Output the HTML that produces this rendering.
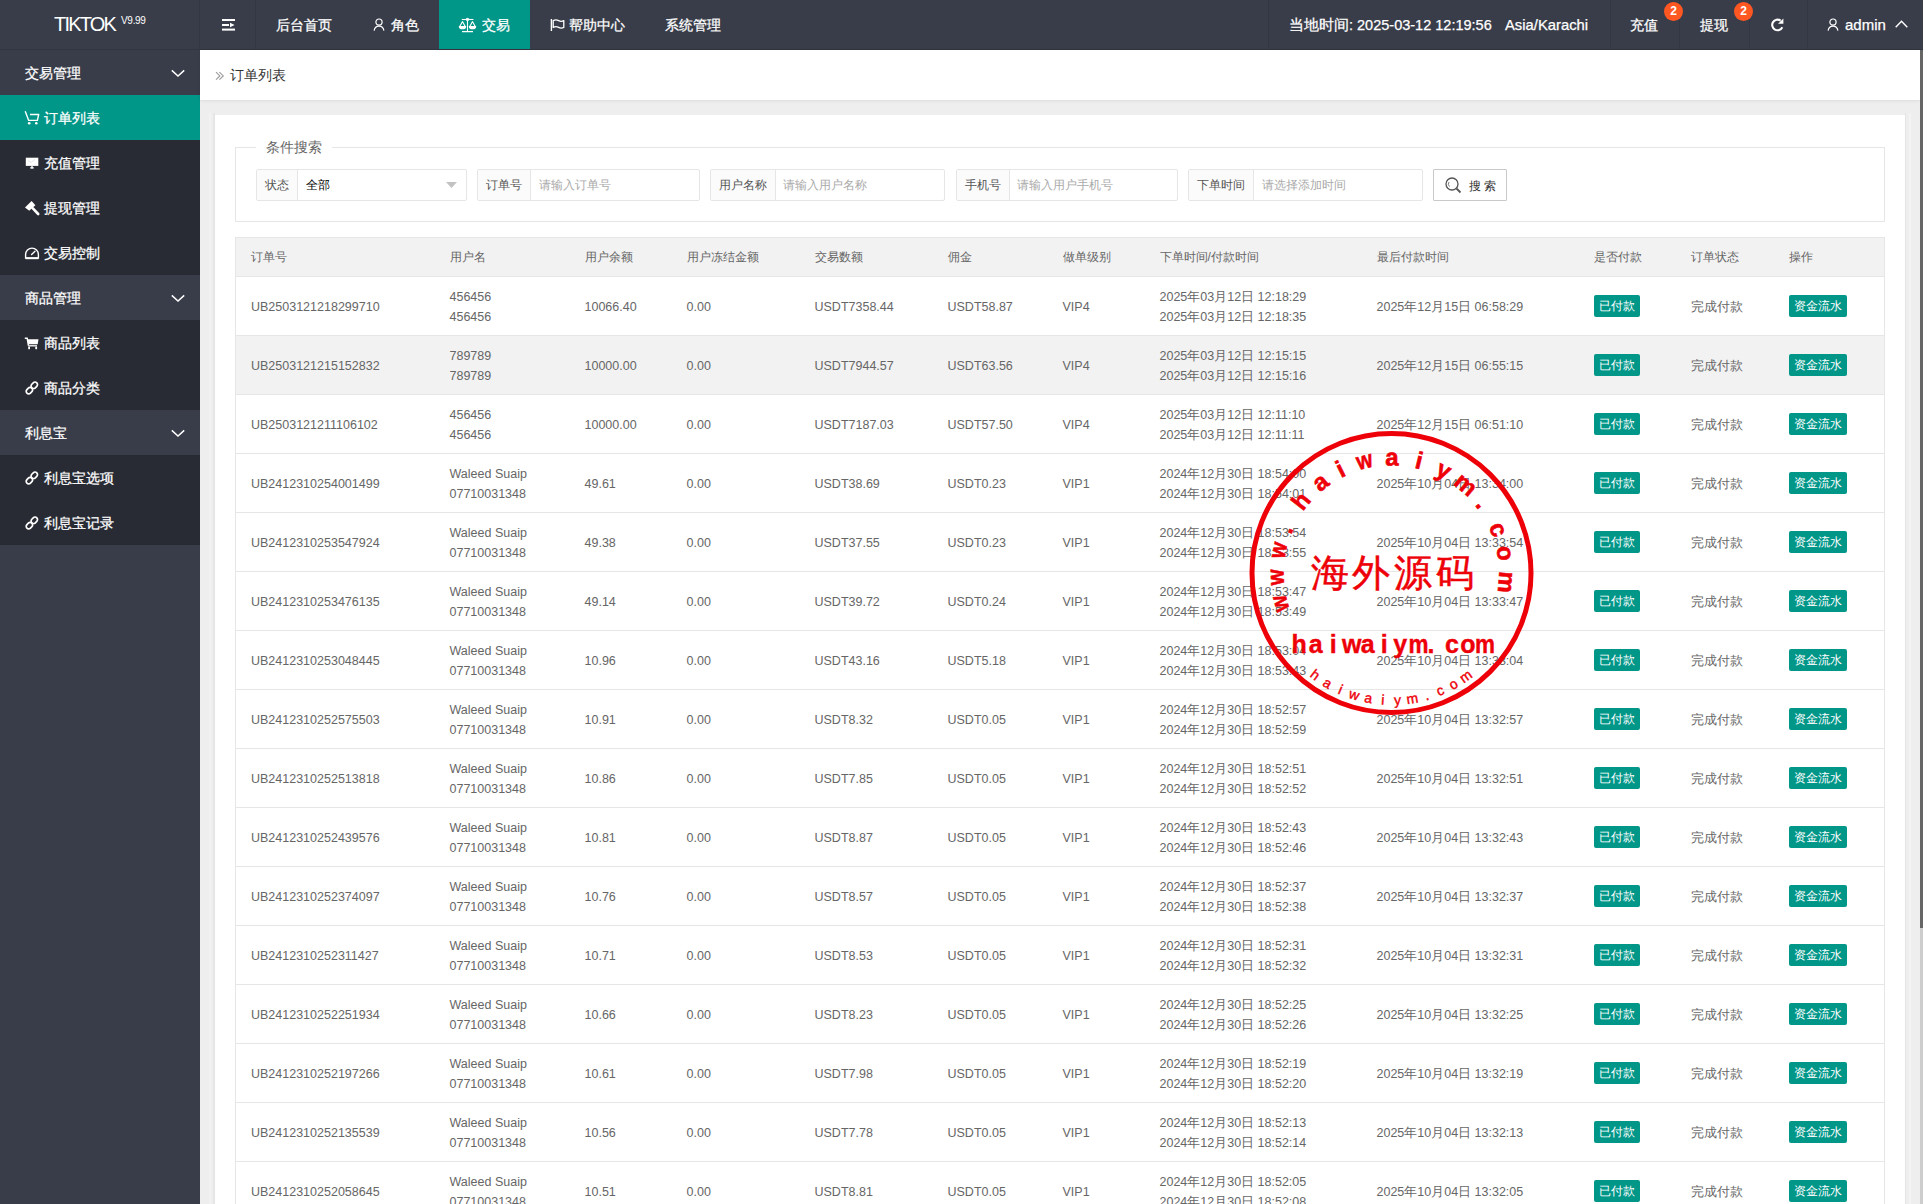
<!DOCTYPE html><html><head><meta charset="utf-8"><title>订单列表</title><style>*{margin:0;padding:0;box-sizing:border-box}
svg{display:block}
html,body{width:1923px;height:1204px;overflow:hidden;background:#eeeeee;font-family:"Liberation Sans",sans-serif;color:#666}
.a{position:absolute;white-space:nowrap}
.hd{position:absolute;left:0;top:0;width:1923px;height:50px;background:#393D49}
.hdl{position:absolute;left:0;top:49px;width:1923px;height:1px;background:#32353f}
.sep{position:absolute;top:0;width:1px;height:49px;background:#333743}
.nt{position:absolute;color:#fff;font-size:14px;line-height:14px;white-space:nowrap;-webkit-text-stroke:0.25px #fff}
.side{position:absolute;left:0;top:50px;width:200px;height:1154px;background:#393D49}
.it{position:absolute;left:0;width:200px;height:45px}
.it.ch{background:#282B33}
.it.on{background:#009688}
.st{position:absolute;left:25px;color:#fff;font-size:14px;line-height:14px;white-space:nowrap;-webkit-text-stroke:0.25px #fff}
.crumb{position:absolute;left:200px;top:50px;width:1720px;height:50px;background:#fff;box-shadow:0 1px 3px rgba(0,0,0,.08)}
.card{position:absolute;left:215px;top:115px;width:1690px;height:1100px;background:#fff}
.sb{position:absolute;left:1920px;top:50px;width:3px;height:1154px;background:#cdcdcd}
.sbt{position:absolute;left:1920px;top:50px;width:3px;height:878px;background:#666}
.fs{position:absolute;left:235px;top:147px;width:1650px;height:75px;border:1px solid #e6e6e6}
.lg{position:absolute;left:256px;top:139px;padding:0 10px;background:#fff;font-size:14px;line-height:16px;color:#666}
.ig{position:absolute;top:169px;height:32px;border:1px solid #e6e6e6;background:#fff;border-radius:2px}
.ig .lb{position:absolute;left:0;top:0;height:30px;background:#fbfbfb;border-right:1px solid #e6e6e6;font-size:12px;line-height:30px;color:#555;padding:0 8px}
.ig .ph{position:absolute;top:0;font-size:12px;line-height:30px;color:#aaa}
.btn{position:absolute;left:1433px;top:169px;width:74px;height:32px;border:1px solid #c9c9c9;border-radius:1px;background:#fff}
.tb{position:absolute;left:235px;top:237px;border-collapse:collapse;table-layout:fixed;width:1650px;border:1px solid #e6e6e6}
.tb th{background:#f2f2f2;font-weight:normal;text-align:left;height:39px;padding:0 15px;border-bottom:1px solid #e6e6e6;font-size:12px;color:#666}
.tb td{height:59px;padding:1px 15px 0 15px;border-bottom:1px solid #e6e6e6;font-size:12.5px;line-height:20px;color:#666;white-space:nowrap}
.tb tr.hov td{background:#f2f2f2}
.bd{position:relative;top:-1px;display:inline-block;height:22px;line-height:22px;padding:0 5px;background:#009688;color:#fff;border-radius:2px;font-size:12px}
</style></head><body><div class="hd"></div>
<div class="hdl"></div>
<div class="a" style="left:54px;top:14px;color:#fff;font-size:20px;line-height:20px;letter-spacing:-1.8px">TIKTOK</div>
<div class="a" style="left:121px;top:16px;color:#fff;font-size:10px;line-height:10px;letter-spacing:-0.3px">V9.99</div>
<div class="sep" style="left:199px"></div>
<div class="sep" style="left:255px"></div>
<svg class="a" style="left:222px;top:19px" width="13" height="12" viewBox="0 0 13 12"><rect x="0" y="0" width="13" height="2" fill="#fff"/><rect x="0" y="5" width="7" height="2" fill="#fff"/><path d="M8 3.8 L12.6 6 L8 8.2z" fill="#fff"/><rect x="0" y="9.6" width="13" height="2" fill="#fff"/></svg>
<div class="nt" style="left:276px;top:18px">后台首页</div>
<svg class="a" style="left:373px;top:17px" width="12" height="15" viewBox="0 0 12 15"><circle cx="6" cy="5.1" r="3.1" fill="none" stroke="#fff" stroke-width="1.2"/><path d="M1.1 13.6 A5 5.6 0 0 1 10.9 13.6" fill="none" stroke="#fff" stroke-width="1.2"/></svg>
<div class="nt" style="left:391px;top:18px">角色</div>
<div class="a" style="left:439px;top:0;width:91px;height:49px;background:#009688"></div>
<svg class="a" style="left:458px;top:17px" width="19" height="16" viewBox="0 0 19 16"><g stroke="#fff" fill="none" stroke-width="1.1"><path d="M3.8 2.5 H15.4"/><circle cx="9.5" cy="2.4" r="1.1"/><path d="M9.5 3.5 V14.6"/><path d="M4 14.6 H15" stroke-width="1.3"/><path d="M4.5 4.6 L1.8 9.6 M4.5 4.6 L7.2 9.6 M14.5 4.6 L11.8 9.6 M14.5 4.6 L17.2 9.6"/><path d="M1.4 9.6 H7.6 Q7.4 11.8 4.5 11.8 Q1.6 11.8 1.4 9.6Z M11.4 9.6 H17.6 Q17.4 11.8 14.5 11.8 Q11.6 11.8 11.4 9.6Z" fill="#fff"/></g></svg>
<div class="nt" style="left:482px;top:18px">交易</div>
<svg class="a" style="left:550px;top:18px" width="15" height="14" viewBox="0 0 15 14"><path d="M1.4 1 V13" stroke="#fff" stroke-width="1.4"/><path d="M3.2 2.6 Q6 1.2 8.6 2.6 Q11.2 4 13.8 2.6 V9.4 Q11.2 10.8 8.6 9.4 Q6 8 3.2 9.4 Z" stroke="#fff" stroke-width="1.3" fill="none" stroke-linejoin="round"/></svg>
<div class="nt" style="left:569px;top:18px">帮助中心</div>
<div class="nt" style="left:665px;top:18px">系统管理</div>

<div class="sep" style="left:1268px"></div>
<div class="nt" style="left:1289px;top:18px;font-size:14.5px">当地时间: 2025-03-12 12:19:56</div>
<div class="nt" style="left:1505px;top:18px;font-size:14.8px">Asia/Karachi</div>
<div class="sep" style="left:1610px"></div>
<div class="nt" style="left:1630px;top:18px">充值</div>
<div class="sep" style="left:1679px"></div>
<div class="nt" style="left:1700px;top:18px">提现</div>
<div class="sep" style="left:1749px"></div>
<svg class="a" style="left:1769px;top:17px" width="16" height="16" viewBox="0 0 16 16"><path d="M13.3 10.2 A5.3 5.3 0 1 1 11.6 3.6" fill="none" stroke="#fff" stroke-width="2.1"/><path d="M9 6.7 L14.4 6.7 L14.4 1.6 Z" fill="#fff"/></svg>
<div class="sep" style="left:1807px"></div>
<div class="a" style="left:1664px;top:2px;width:19px;height:19px;border-radius:50%;background:#FF5722;color:#fff;font-size:12px;line-height:19px;text-align:center;font-weight:bold">2</div>
<div class="a" style="left:1734px;top:2px;width:19px;height:19px;border-radius:50%;background:#FF5722;color:#fff;font-size:12px;line-height:19px;text-align:center;font-weight:bold">2</div>
<svg class="a" style="left:1827px;top:17px" width="12" height="15" viewBox="0 0 12 15"><circle cx="6" cy="5.1" r="3.1" fill="none" stroke="#fff" stroke-width="1.2"/><path d="M1.1 13.6 A5 5.6 0 0 1 10.9 13.6" fill="none" stroke="#fff" stroke-width="1.2"/></svg>
<div class="nt" style="left:1845px;top:18px;font-size:15px">admin</div>
<div class="a" style="left:1895px;top:20px;width:13px;height:8px"><svg width="13" height="8" viewBox="0 0 13 8"><path d="M0.7 7.3 L6.5 1.3 L12.3 7.3" fill="none" stroke="#fff" stroke-width="1.4"/></svg></div>

<div class="side">
 <div class="it" style="top:0"><div class="st" style="top:16px">交易管理</div></div>
 <div class="it on" style="top:45px"><div class="st" style="left:44px;top:16px">订单列表</div></div>
 <div class="it ch" style="top:90px"><div class="st" style="left:44px;top:16px">充值管理</div></div>
 <div class="it ch" style="top:135px"><div class="st" style="left:44px;top:16px">提现管理</div></div>
 <div class="it ch" style="top:180px"><div class="st" style="left:44px;top:16px">交易控制</div></div>
 <div class="it" style="top:225px"><div class="st" style="top:16px">商品管理</div></div>
 <div class="it ch" style="top:270px"><div class="st" style="left:44px;top:16px">商品列表</div></div>
 <div class="it ch" style="top:315px"><div class="st" style="left:44px;top:16px">商品分类</div></div>
 <div class="it" style="top:360px"><div class="st" style="top:16px">利息宝</div></div>
 <div class="it ch" style="top:405px"><div class="st" style="left:44px;top:16px">利息宝选项</div></div>
 <div class="it ch" style="top:450px"><div class="st" style="left:44px;top:16px">利息宝记录</div></div>
</div>

<div class="crumb"></div>
<!-- sidebar arrows -->
<svg class="a" style="left:171px;top:69px" width="14" height="8" viewBox="0 0 14 8"><path d="M0.8 1.4 L7 7 L13.2 1.4" fill="none" stroke="#fff" stroke-width="1.5"/></svg>
<svg class="a" style="left:171px;top:294px" width="14" height="8" viewBox="0 0 14 8"><path d="M0.8 1.4 L7 7 L13.2 1.4" fill="none" stroke="#fff" stroke-width="1.5"/></svg>
<svg class="a" style="left:171px;top:429px" width="14" height="8" viewBox="0 0 14 8"><path d="M0.8 1.4 L7 7 L13.2 1.4" fill="none" stroke="#fff" stroke-width="1.5"/></svg>
<!-- cart outline -->
<svg class="a" style="left:24px;top:110px" width="16" height="16" viewBox="0 0 16 16"><path d="M1.2 1.2 L4.7 10.4 H13.4 L14.7 4.5 H6" fill="none" stroke="#fff" stroke-width="1.4" stroke-linejoin="round"/><circle cx="5.2" cy="13.3" r="1.3" fill="#fff"/><circle cx="12.3" cy="13.3" r="1.3" fill="#fff"/></svg>
<!-- monitor -->
<svg class="a" style="left:25px;top:157px" width="14" height="12" viewBox="0 0 14 12"><rect x="0.8" y="0.7" width="12.5" height="8.2" fill="#fff"/><path d="M3 3.5 L6 5.5 L10 2.5" stroke="#cfd3dc" stroke-width="0.6" fill="none"/><rect x="6.3" y="8.9" width="1.4" height="1.4" fill="#fff"/><ellipse cx="7" cy="10.9" rx="2" ry="0.8" fill="#fff"/></svg>
<!-- hammer -->
<svg class="a" style="left:24px;top:200px" width="17" height="17" viewBox="0 0 17 17"><path d="M1 7.5 L7.6 1 L11.4 5.2 L5.2 10.8 Z" fill="#fff"/><path d="M8.6 8.2 L14.2 14" stroke="#fff" stroke-width="2.6" stroke-linecap="round"/></svg>
<!-- gauge -->
<svg class="a" style="left:24px;top:246px" width="16" height="14" viewBox="0 0 16 14"><path d="M1.6 12 V8.5 A6.4 6.4 0 0 1 14.4 8.5 V12 Z" fill="none" stroke="#fff" stroke-width="1.4"/><path d="M1.6 12.3 H14.4" stroke="#fff" stroke-width="1.8"/><path d="M7.6 8.5 L11 5.3" stroke="#fff" stroke-width="1.4" stroke-linecap="round"/></svg>
<!-- filled cart -->
<svg class="a" style="left:24px;top:337px" width="16" height="14" viewBox="0 0 16 14"><path d="M0.8 1.3 H3.2 L4.4 8.6" fill="none" stroke="#fff" stroke-width="1.4"/><path d="M3.4 2.2 H14.5 L13.7 7.3 H4.3 Z" fill="#fff"/><path d="M4.3 8.8 H13" stroke="#fff" stroke-width="1.3"/><rect x="4.2" y="9.6" width="1.8" height="2.6" fill="#fff"/><rect x="11.3" y="9.6" width="1.8" height="2.6" fill="#fff"/></svg>
<!-- links -->
<svg class="a" style="left:24px;top:379px" width="17" height="17" viewBox="0 0 17 17"><g fill="none" stroke="#fff" stroke-width="1.7"><rect x="-3.5" y="-2.5" width="7" height="5" rx="2.5" transform="translate(5.4 11.6) rotate(-45)"/><rect x="-3.5" y="-2.5" width="7" height="5" rx="2.5" transform="translate(10.3 6.3) rotate(-45)"/></g></svg>
<svg class="a" style="left:24px;top:469px" width="17" height="17" viewBox="0 0 17 17"><g fill="none" stroke="#fff" stroke-width="1.7"><rect x="-3.5" y="-2.5" width="7" height="5" rx="2.5" transform="translate(5.4 11.6) rotate(-45)"/><rect x="-3.5" y="-2.5" width="7" height="5" rx="2.5" transform="translate(10.3 6.3) rotate(-45)"/></g></svg>
<svg class="a" style="left:24px;top:514px" width="17" height="17" viewBox="0 0 17 17"><g fill="none" stroke="#fff" stroke-width="1.7"><rect x="-3.5" y="-2.5" width="7" height="5" rx="2.5" transform="translate(5.4 11.6) rotate(-45)"/><rect x="-3.5" y="-2.5" width="7" height="5" rx="2.5" transform="translate(10.3 6.3) rotate(-45)"/></g></svg>
<!-- breadcrumb chevrons -->
<svg class="a" style="left:215px;top:71px" width="10" height="10" viewBox="0 0 10 10"><path d="M1 1.2 L4.9 4.9 L1 8.6 M4.4 1.2 L8.3 4.9 L4.4 8.6" fill="none" stroke="#9a9a9a" stroke-width="1.1"/></svg>

<div class="a" style="left:230px;top:68px;color:#333;font-size:14px;line-height:14px">订单列表</div>
<div class="a" style="left:1905px;top:113px;width:1px;height:1091px;background:#e4e4e4"></div><div class="a" style="left:1909px;top:113px;width:2px;height:1091px;background:#f3f3f3"></div><div class="a" style="left:213px;top:113px;width:2px;height:1091px;background:#e6e6e6"></div><div class="a" style="left:209px;top:113px;width:2px;height:1091px;background:#f2f2f2"></div>
<div class="card"></div>
<div class="fs"></div>
<div class="lg">条件搜索</div>

<div class="ig" style="left:256px;width:211px"><div class="lb">状态</div><div class="ph" style="left:49px;color:#000">全部</div>
<svg class="a" style="left:189px;top:12px" width="11" height="6" viewBox="0 0 11 6"><path d="M0 0 H11 L5.5 6Z" fill="#c2c2c2"/></svg></div>
<div class="ig" style="left:477px;width:223px"><div class="lb">订单号</div><div class="ph" style="left:61px">请输入订单号</div></div>
<div class="ig" style="left:710px;width:235px"><div class="lb">用户名称</div><div class="ph" style="left:72px">请输入用户名称</div></div>
<div class="ig" style="left:956px;width:222px"><div class="lb">手机号</div><div class="ph" style="left:60px">请输入用户手机号</div></div>
<div class="ig" style="left:1188px;width:235px"><div class="lb">下单时间</div><div class="ph" style="left:73px">请选择添加时间</div></div>
<div class="btn"><svg class="a" style="left:11px;top:7px" width="17" height="17" viewBox="0 0 17 17"><circle cx="7" cy="7" r="6" fill="none" stroke="#555" stroke-width="1.3"/><path d="M11.5 11.5 L15.5 15.5" stroke="#555" stroke-width="1.8"/><path d="M4 5 A3.5 3.5 0 0 0 4.5 9.5" fill="none" stroke="#555" stroke-width="0.8"/></svg>
<div class="a" style="left:35px;top:9px;font-size:12px;line-height:14px;color:#333;letter-spacing:3px">搜索</div></div>

<table class="tb"><colgroup><col style="width:199px"><col style="width:135px"><col style="width:102px"><col style="width:128px"><col style="width:133px"><col style="width:115px"><col style="width:97px"><col style="width:217px"><col style="width:217px"><col style="width:97px"><col style="width:98px"><col style="width:111px"></colgroup><thead><tr><th><div class="c">订单号</div></th><th><div class="c">用户名</div></th><th><div class="c">用户余额</div></th><th><div class="c">用户冻结金额</div></th><th><div class="c">交易数额</div></th><th><div class="c">佣金</div></th><th><div class="c">做单级别</div></th><th><div class="c">下单时间/付款时间</div></th><th><div class="c">最后付款时间</div></th><th><div class="c">是否付款</div></th><th><div class="c">订单状态</div></th><th><div class="c">操作</div></th></tr></thead><tbody><tr><td><div class="c">UB2503121218299710</div></td><td><div class="c">456456<br>456456</div></td><td><div class="c">10066.40</div></td><td><div class="c">0.00</div></td><td><div class="c">USDT7358.44</div></td><td><div class="c">USDT58.87</div></td><td><div class="c">VIP4</div></td><td><div class="c">2025年03月12日 12:18:29<br>2025年03月12日 12:18:35</div></td><td><div class="c">2025年12月15日 06:58:29</div></td><td><div class="c"><span class="bd">已付款</span></div></td><td><div class="c">完成付款</div></td><td><div class="c"><span class="bd bd2">资金流水</span></div></td></tr><tr class="hov"><td><div class="c">UB2503121215152832</div></td><td><div class="c">789789<br>789789</div></td><td><div class="c">10000.00</div></td><td><div class="c">0.00</div></td><td><div class="c">USDT7944.57</div></td><td><div class="c">USDT63.56</div></td><td><div class="c">VIP4</div></td><td><div class="c">2025年03月12日 12:15:15<br>2025年03月12日 12:15:16</div></td><td><div class="c">2025年12月15日 06:55:15</div></td><td><div class="c"><span class="bd">已付款</span></div></td><td><div class="c">完成付款</div></td><td><div class="c"><span class="bd bd2">资金流水</span></div></td></tr><tr><td><div class="c">UB2503121211106102</div></td><td><div class="c">456456<br>456456</div></td><td><div class="c">10000.00</div></td><td><div class="c">0.00</div></td><td><div class="c">USDT7187.03</div></td><td><div class="c">USDT57.50</div></td><td><div class="c">VIP4</div></td><td><div class="c">2025年03月12日 12:11:10<br>2025年03月12日 12:11:11</div></td><td><div class="c">2025年12月15日 06:51:10</div></td><td><div class="c"><span class="bd">已付款</span></div></td><td><div class="c">完成付款</div></td><td><div class="c"><span class="bd bd2">资金流水</span></div></td></tr><tr><td><div class="c">UB2412310254001499</div></td><td><div class="c">Waleed Suaip<br>07710031348</div></td><td><div class="c">49.61</div></td><td><div class="c">0.00</div></td><td><div class="c">USDT38.69</div></td><td><div class="c">USDT0.23</div></td><td><div class="c">VIP1</div></td><td><div class="c">2024年12月30日 18:54:00<br>2024年12月30日 18:54:01</div></td><td><div class="c">2025年10月04日 13:34:00</div></td><td><div class="c"><span class="bd">已付款</span></div></td><td><div class="c">完成付款</div></td><td><div class="c"><span class="bd bd2">资金流水</span></div></td></tr><tr><td><div class="c">UB2412310253547924</div></td><td><div class="c">Waleed Suaip<br>07710031348</div></td><td><div class="c">49.38</div></td><td><div class="c">0.00</div></td><td><div class="c">USDT37.55</div></td><td><div class="c">USDT0.23</div></td><td><div class="c">VIP1</div></td><td><div class="c">2024年12月30日 18:53:54<br>2024年12月30日 18:53:55</div></td><td><div class="c">2025年10月04日 13:33:54</div></td><td><div class="c"><span class="bd">已付款</span></div></td><td><div class="c">完成付款</div></td><td><div class="c"><span class="bd bd2">资金流水</span></div></td></tr><tr><td><div class="c">UB2412310253476135</div></td><td><div class="c">Waleed Suaip<br>07710031348</div></td><td><div class="c">49.14</div></td><td><div class="c">0.00</div></td><td><div class="c">USDT39.72</div></td><td><div class="c">USDT0.24</div></td><td><div class="c">VIP1</div></td><td><div class="c">2024年12月30日 18:53:47<br>2024年12月30日 18:53:49</div></td><td><div class="c">2025年10月04日 13:33:47</div></td><td><div class="c"><span class="bd">已付款</span></div></td><td><div class="c">完成付款</div></td><td><div class="c"><span class="bd bd2">资金流水</span></div></td></tr><tr><td><div class="c">UB2412310253048445</div></td><td><div class="c">Waleed Suaip<br>07710031348</div></td><td><div class="c">10.96</div></td><td><div class="c">0.00</div></td><td><div class="c">USDT43.16</div></td><td><div class="c">USDT5.18</div></td><td><div class="c">VIP1</div></td><td><div class="c">2024年12月30日 18:53:04<br>2024年12月30日 18:53:43</div></td><td><div class="c">2025年10月04日 13:33:04</div></td><td><div class="c"><span class="bd">已付款</span></div></td><td><div class="c">完成付款</div></td><td><div class="c"><span class="bd bd2">资金流水</span></div></td></tr><tr><td><div class="c">UB2412310252575503</div></td><td><div class="c">Waleed Suaip<br>07710031348</div></td><td><div class="c">10.91</div></td><td><div class="c">0.00</div></td><td><div class="c">USDT8.32</div></td><td><div class="c">USDT0.05</div></td><td><div class="c">VIP1</div></td><td><div class="c">2024年12月30日 18:52:57<br>2024年12月30日 18:52:59</div></td><td><div class="c">2025年10月04日 13:32:57</div></td><td><div class="c"><span class="bd">已付款</span></div></td><td><div class="c">完成付款</div></td><td><div class="c"><span class="bd bd2">资金流水</span></div></td></tr><tr><td><div class="c">UB2412310252513818</div></td><td><div class="c">Waleed Suaip<br>07710031348</div></td><td><div class="c">10.86</div></td><td><div class="c">0.00</div></td><td><div class="c">USDT7.85</div></td><td><div class="c">USDT0.05</div></td><td><div class="c">VIP1</div></td><td><div class="c">2024年12月30日 18:52:51<br>2024年12月30日 18:52:52</div></td><td><div class="c">2025年10月04日 13:32:51</div></td><td><div class="c"><span class="bd">已付款</span></div></td><td><div class="c">完成付款</div></td><td><div class="c"><span class="bd bd2">资金流水</span></div></td></tr><tr><td><div class="c">UB2412310252439576</div></td><td><div class="c">Waleed Suaip<br>07710031348</div></td><td><div class="c">10.81</div></td><td><div class="c">0.00</div></td><td><div class="c">USDT8.87</div></td><td><div class="c">USDT0.05</div></td><td><div class="c">VIP1</div></td><td><div class="c">2024年12月30日 18:52:43<br>2024年12月30日 18:52:46</div></td><td><div class="c">2025年10月04日 13:32:43</div></td><td><div class="c"><span class="bd">已付款</span></div></td><td><div class="c">完成付款</div></td><td><div class="c"><span class="bd bd2">资金流水</span></div></td></tr><tr><td><div class="c">UB2412310252374097</div></td><td><div class="c">Waleed Suaip<br>07710031348</div></td><td><div class="c">10.76</div></td><td><div class="c">0.00</div></td><td><div class="c">USDT8.57</div></td><td><div class="c">USDT0.05</div></td><td><div class="c">VIP1</div></td><td><div class="c">2024年12月30日 18:52:37<br>2024年12月30日 18:52:38</div></td><td><div class="c">2025年10月04日 13:32:37</div></td><td><div class="c"><span class="bd">已付款</span></div></td><td><div class="c">完成付款</div></td><td><div class="c"><span class="bd bd2">资金流水</span></div></td></tr><tr><td><div class="c">UB2412310252311427</div></td><td><div class="c">Waleed Suaip<br>07710031348</div></td><td><div class="c">10.71</div></td><td><div class="c">0.00</div></td><td><div class="c">USDT8.53</div></td><td><div class="c">USDT0.05</div></td><td><div class="c">VIP1</div></td><td><div class="c">2024年12月30日 18:52:31<br>2024年12月30日 18:52:32</div></td><td><div class="c">2025年10月04日 13:32:31</div></td><td><div class="c"><span class="bd">已付款</span></div></td><td><div class="c">完成付款</div></td><td><div class="c"><span class="bd bd2">资金流水</span></div></td></tr><tr><td><div class="c">UB2412310252251934</div></td><td><div class="c">Waleed Suaip<br>07710031348</div></td><td><div class="c">10.66</div></td><td><div class="c">0.00</div></td><td><div class="c">USDT8.23</div></td><td><div class="c">USDT0.05</div></td><td><div class="c">VIP1</div></td><td><div class="c">2024年12月30日 18:52:25<br>2024年12月30日 18:52:26</div></td><td><div class="c">2025年10月04日 13:32:25</div></td><td><div class="c"><span class="bd">已付款</span></div></td><td><div class="c">完成付款</div></td><td><div class="c"><span class="bd bd2">资金流水</span></div></td></tr><tr><td><div class="c">UB2412310252197266</div></td><td><div class="c">Waleed Suaip<br>07710031348</div></td><td><div class="c">10.61</div></td><td><div class="c">0.00</div></td><td><div class="c">USDT7.98</div></td><td><div class="c">USDT0.05</div></td><td><div class="c">VIP1</div></td><td><div class="c">2024年12月30日 18:52:19<br>2024年12月30日 18:52:20</div></td><td><div class="c">2025年10月04日 13:32:19</div></td><td><div class="c"><span class="bd">已付款</span></div></td><td><div class="c">完成付款</div></td><td><div class="c"><span class="bd bd2">资金流水</span></div></td></tr><tr><td><div class="c">UB2412310252135539</div></td><td><div class="c">Waleed Suaip<br>07710031348</div></td><td><div class="c">10.56</div></td><td><div class="c">0.00</div></td><td><div class="c">USDT7.78</div></td><td><div class="c">USDT0.05</div></td><td><div class="c">VIP1</div></td><td><div class="c">2024年12月30日 18:52:13<br>2024年12月30日 18:52:14</div></td><td><div class="c">2025年10月04日 13:32:13</div></td><td><div class="c"><span class="bd">已付款</span></div></td><td><div class="c">完成付款</div></td><td><div class="c"><span class="bd bd2">资金流水</span></div></td></tr><tr><td><div class="c">UB2412310252058645</div></td><td><div class="c">Waleed Suaip<br>07710031348</div></td><td><div class="c">10.51</div></td><td><div class="c">0.00</div></td><td><div class="c">USDT8.81</div></td><td><div class="c">USDT0.05</div></td><td><div class="c">VIP1</div></td><td><div class="c">2024年12月30日 18:52:05<br>2024年12月30日 18:52:08</div></td><td><div class="c">2025年10月04日 13:32:05</div></td><td><div class="c"><span class="bd">已付款</span></div></td><td><div class="c">完成付款</div></td><td><div class="c"><span class="bd bd2">资金流水</span></div></td></tr></tbody></table>
<svg class="a" style="left:0;top:0;pointer-events:none" width="1923" height="1204" viewBox="0 0 1923 1204">
<circle cx="1391.5" cy="573.0" r="139.5" fill="none" stroke="#ee0008" stroke-width="5"/>
<text transform="translate(1279.7 603.8) rotate(254.6) scale(0.85 1)" text-anchor="middle" dominant-baseline="central" font-family="Liberation Sans" font-weight="bold" font-size="24" fill="#ee0008" stroke="#ee0008" stroke-width="0.6">w</text>
<text transform="translate(1275.6 577.3) rotate(267.9) scale(0.85 1)" text-anchor="middle" dominant-baseline="central" font-family="Liberation Sans" font-weight="bold" font-size="24" fill="#ee0008" stroke="#ee0008" stroke-width="0.6">w</text>
<text transform="translate(1277.8 550.1) rotate(281.4) scale(0.85 1)" text-anchor="middle" dominant-baseline="central" font-family="Liberation Sans" font-weight="bold" font-size="24" fill="#ee0008" stroke="#ee0008" stroke-width="0.6">w</text>
<text transform="translate(1284.3 528.6) rotate(292.5) scale(1.00 1)" text-anchor="middle" dominant-baseline="central" font-family="Liberation Sans" font-weight="bold" font-size="24" fill="#ee0008" stroke="#ee0008" stroke-width="0.6">.</text>
<text transform="translate(1300.7 500.8) rotate(308.5) scale(1.00 1)" text-anchor="middle" dominant-baseline="central" font-family="Liberation Sans" font-weight="bold" font-size="24" fill="#ee0008" stroke="#ee0008" stroke-width="0.6">h</text>
<text transform="translate(1319.9 481.7) rotate(321.9) scale(1.00 1)" text-anchor="middle" dominant-baseline="central" font-family="Liberation Sans" font-weight="bold" font-size="24" fill="#ee0008" stroke="#ee0008" stroke-width="0.6">a</text>
<text transform="translate(1340.1 469.0) rotate(333.7) scale(1.00 1)" text-anchor="middle" dominant-baseline="central" font-family="Liberation Sans" font-weight="bold" font-size="24" fill="#ee0008" stroke="#ee0008" stroke-width="0.6">i</text>
<text transform="translate(1364.4 460.2) rotate(346.5) scale(0.85 1)" text-anchor="middle" dominant-baseline="central" font-family="Liberation Sans" font-weight="bold" font-size="24" fill="#ee0008" stroke="#ee0008" stroke-width="0.6">w</text>
<text transform="translate(1391.9 457.0) rotate(360.2) scale(1.00 1)" text-anchor="middle" dominant-baseline="central" font-family="Liberation Sans" font-weight="bold" font-size="24" fill="#ee0008" stroke="#ee0008" stroke-width="0.6">a</text>
<text transform="translate(1419.2 460.3) rotate(373.8) scale(1.00 1)" text-anchor="middle" dominant-baseline="central" font-family="Liberation Sans" font-weight="bold" font-size="24" fill="#ee0008" stroke="#ee0008" stroke-width="0.6">i</text>
<text transform="translate(1444.0 469.6) rotate(386.9) scale(1.00 1)" text-anchor="middle" dominant-baseline="central" font-family="Liberation Sans" font-weight="bold" font-size="24" fill="#ee0008" stroke="#ee0008" stroke-width="0.6">y</text>
<text transform="translate(1466.1 484.1) rotate(400.0) scale(1.00 1)" text-anchor="middle" dominant-baseline="central" font-family="Liberation Sans" font-weight="bold" font-size="24" fill="#ee0008" stroke="#ee0008" stroke-width="0.6">m</text>
<text transform="translate(1483.5 502.4) rotate(412.5) scale(1.00 1)" text-anchor="middle" dominant-baseline="central" font-family="Liberation Sans" font-weight="bold" font-size="24" fill="#ee0008" stroke="#ee0008" stroke-width="0.6">.</text>
<text transform="translate(1498.9 529.2) rotate(427.8) scale(1.00 1)" text-anchor="middle" dominant-baseline="central" font-family="Liberation Sans" font-weight="bold" font-size="24" fill="#ee0008" stroke="#ee0008" stroke-width="0.6">c</text>
<text transform="translate(1505.8 553.1) rotate(440.1) scale(1.00 1)" text-anchor="middle" dominant-baseline="central" font-family="Liberation Sans" font-weight="bold" font-size="24" fill="#ee0008" stroke="#ee0008" stroke-width="0.6">o</text>
<text transform="translate(1507.1 582.3) rotate(454.6) scale(1.00 1)" text-anchor="middle" dominant-baseline="central" font-family="Liberation Sans" font-weight="bold" font-size="24" fill="#ee0008" stroke="#ee0008" stroke-width="0.6">m</text>
<text transform="translate(1315.4 674.7) rotate(36.8)" text-anchor="middle" dominant-baseline="central" font-family="Liberation Sans" font-size="14" fill="#ee0008" stroke="#ee0008" stroke-width="0.4">h</text>
<text transform="translate(1327.6 682.8) rotate(30.2)" text-anchor="middle" dominant-baseline="central" font-family="Liberation Sans" font-size="14" fill="#ee0008" stroke="#ee0008" stroke-width="0.4">a</text>
<text transform="translate(1340.6 689.4) rotate(23.6)" text-anchor="middle" dominant-baseline="central" font-family="Liberation Sans" font-size="14" fill="#ee0008" stroke="#ee0008" stroke-width="0.4">i</text>
<text transform="translate(1354.3 694.4) rotate(17.0)" text-anchor="middle" dominant-baseline="central" font-family="Liberation Sans" font-size="14" fill="#ee0008" stroke="#ee0008" stroke-width="0.4">w</text>
<text transform="translate(1368.5 697.9) rotate(10.4)" text-anchor="middle" dominant-baseline="central" font-family="Liberation Sans" font-size="14" fill="#ee0008" stroke="#ee0008" stroke-width="0.4">a</text>
<text transform="translate(1383.0 699.7) rotate(3.8)" text-anchor="middle" dominant-baseline="central" font-family="Liberation Sans" font-size="14" fill="#ee0008" stroke="#ee0008" stroke-width="0.4">i</text>
<text transform="translate(1397.6 699.9) rotate(-2.7)" text-anchor="middle" dominant-baseline="central" font-family="Liberation Sans" font-size="14" fill="#ee0008" stroke="#ee0008" stroke-width="0.4">y</text>
<text transform="translate(1412.1 698.3) rotate(-9.3)" text-anchor="middle" dominant-baseline="central" font-family="Liberation Sans" font-size="14" fill="#ee0008" stroke="#ee0008" stroke-width="0.4">m</text>
<text transform="translate(1426.4 695.1) rotate(-15.9)" text-anchor="middle" dominant-baseline="central" font-family="Liberation Sans" font-size="14" fill="#ee0008" stroke="#ee0008" stroke-width="0.4">.</text>
<text transform="translate(1440.1 690.3) rotate(-22.5)" text-anchor="middle" dominant-baseline="central" font-family="Liberation Sans" font-size="14" fill="#ee0008" stroke="#ee0008" stroke-width="0.4">c</text>
<text transform="translate(1453.3 684.0) rotate(-29.1)" text-anchor="middle" dominant-baseline="central" font-family="Liberation Sans" font-size="14" fill="#ee0008" stroke="#ee0008" stroke-width="0.4">o</text>
<text transform="translate(1465.6 676.1) rotate(-35.7)" text-anchor="middle" dominant-baseline="central" font-family="Liberation Sans" font-size="14" fill="#ee0008" stroke="#ee0008" stroke-width="0.4">m</text>
<text transform="translate(1299.1 652.9) scale(1.00 1)" text-anchor="middle" font-family="Liberation Sans" font-weight="bold" font-size="25" fill="#ee0008" stroke="#ee0008" stroke-width="0.4">h</text>
<text transform="translate(1315.6 652.9) scale(1.00 1)" text-anchor="middle" font-family="Liberation Sans" font-weight="bold" font-size="25" fill="#ee0008" stroke="#ee0008" stroke-width="0.4">a</text>
<text transform="translate(1333.2 652.9) scale(1.00 1)" text-anchor="middle" font-family="Liberation Sans" font-weight="bold" font-size="25" fill="#ee0008" stroke="#ee0008" stroke-width="0.4">i</text>
<text transform="translate(1351.8 652.9) scale(1.00 1)" text-anchor="middle" font-family="Liberation Sans" font-weight="bold" font-size="25" fill="#ee0008" stroke="#ee0008" stroke-width="0.4">w</text>
<text transform="translate(1367.6 652.9) scale(1.00 1)" text-anchor="middle" font-family="Liberation Sans" font-weight="bold" font-size="25" fill="#ee0008" stroke="#ee0008" stroke-width="0.4">a</text>
<text transform="translate(1384.1 652.9) scale(1.00 1)" text-anchor="middle" font-family="Liberation Sans" font-weight="bold" font-size="25" fill="#ee0008" stroke="#ee0008" stroke-width="0.4">i</text>
<text transform="translate(1400.2 652.9) scale(1.00 1)" text-anchor="middle" font-family="Liberation Sans" font-weight="bold" font-size="25" fill="#ee0008" stroke="#ee0008" stroke-width="0.4">y</text>
<text transform="translate(1418.5 652.9) scale(0.90 1)" text-anchor="middle" font-family="Liberation Sans" font-weight="bold" font-size="25" fill="#ee0008" stroke="#ee0008" stroke-width="0.4">m</text>
<text transform="translate(1431.0 652.9) scale(1.00 1)" text-anchor="middle" font-family="Liberation Sans" font-weight="bold" font-size="25" fill="#ee0008" stroke="#ee0008" stroke-width="0.4">.</text>
<text transform="translate(1452.0 652.9) scale(1.00 1)" text-anchor="middle" font-family="Liberation Sans" font-weight="bold" font-size="25" fill="#ee0008" stroke="#ee0008" stroke-width="0.4">c</text>
<text transform="translate(1467.8 652.9) scale(1.00 1)" text-anchor="middle" font-family="Liberation Sans" font-weight="bold" font-size="25" fill="#ee0008" stroke="#ee0008" stroke-width="0.4">o</text>
<text transform="translate(1484.9 652.9) scale(0.90 1)" text-anchor="middle" font-family="Liberation Sans" font-weight="bold" font-size="25" fill="#ee0008" stroke="#ee0008" stroke-width="0.4">m</text>
<text x="1330.3" y="573" text-anchor="middle" dominant-baseline="central" font-family="Liberation Serif" font-size="38" fill="#ee0008" stroke="#ee0008" stroke-width="0.5">海</text>
<text x="1371.4" y="573" text-anchor="middle" dominant-baseline="central" font-family="Liberation Serif" font-size="38" fill="#ee0008" stroke="#ee0008" stroke-width="0.5">外</text>
<text x="1413.0" y="573" text-anchor="middle" dominant-baseline="central" font-family="Liberation Serif" font-size="38" fill="#ee0008" stroke="#ee0008" stroke-width="0.5">源</text>
<text x="1454.5" y="573" text-anchor="middle" dominant-baseline="central" font-family="Liberation Serif" font-size="38" fill="#ee0008" stroke="#ee0008" stroke-width="0.5">码</text>
</svg>

<div class="sb"></div><div class="sbt"></div>
</body></html>
